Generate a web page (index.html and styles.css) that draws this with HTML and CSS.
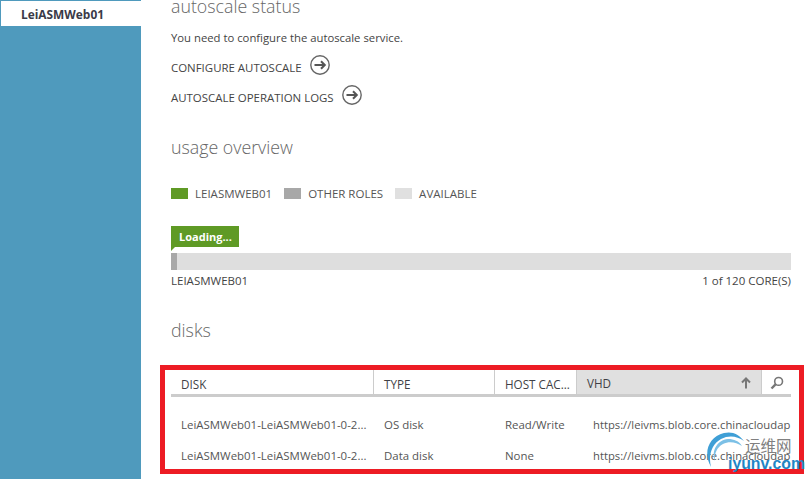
FILE: index.html
```html
<!DOCTYPE html>
<html lang="en">
<head>
<meta charset="utf-8">
<title>LeiASMWeb01</title>
<link rel="stylesheet" href="styles.css">
</head>
<body>
<div class="page">
  <aside class="sidebar">
    <div class="tab">LeiASMWeb01</div>
  </aside>
  <main class="main">
    <h2 class="heading first">autoscale status</h2>
    <p class="note">You need to configure the autoscale service.</p>
    <a class="action one">CONFIGURE AUTOSCALE
      <svg class="go" viewBox="0 0 20 20"><circle cx="10" cy="10" r="9.2" fill="none" stroke="#666" stroke-width="1.4"/><path d="M4.5 10H15M11 6.2l3.8 3.8-3.8 3.8" fill="none" stroke="#555" stroke-width="2"/></svg>
    </a>
    <a class="action two">AUTOSCALE OPERATION LOGS
      <svg class="go" viewBox="0 0 20 20"><circle cx="10" cy="10" r="9.2" fill="none" stroke="#666" stroke-width="1.4"/><path d="M4.5 10H15M11 6.2l3.8 3.8-3.8 3.8" fill="none" stroke="#555" stroke-width="2"/></svg>
    </a>
    <h2 class="heading usage">usage overview</h2>
    <div class="legend">
      <span class="swatch green"></span><span>LEIASMWEB01</span>
      <span class="swatch gray"></span><span>OTHER ROLES</span>
      <span class="swatch light"></span><span>AVAILABLE</span>
    </div>
    <div class="flag">Loading...</div>
    <div class="bar"><div class="fill"></div></div>
    <div class="barlabels"><span>LEIASMWEB01</span><span>1 of 120 CORE(S)</span></div>
    <h2 class="heading disks">disks</h2>
    <section class="redbox">
      <div class="grid head">
        <div class="th">DISK</div>
        <div class="th">TYPE</div>
        <div class="th">HOST CAC...</div>
        <div class="th sorted">VHD
          <svg class="arrow" viewBox="0 0 10 12"><path d="M5 11.5V1.5M1 5.5l4-4 4 4" fill="none" stroke="#777" stroke-width="2"/></svg>
        </div>
        <div class="th search">
          <svg class="lens" viewBox="0 0 14 14"><circle cx="8.6" cy="5.4" r="3.9" fill="none" stroke="#777" stroke-width="1.6"/><path d="M5.8 8.2L1.5 12.5" stroke="#777" stroke-width="2.4"/></svg>
        </div>
      </div>
      <div class="grid row r1">
        <div class="td">LeiASMWeb01-LeiASMWeb01-0-2...</div>
        <div class="td">OS disk</div>
        <div class="td">Read/Write</div>
        <div class="td url">https://leivms.blob.core.chinacloudap</div>
      </div>
      <div class="grid row r2">
        <div class="td">LeiASMWeb01-LeiASMWeb01-0-2...</div>
        <div class="td">Data disk</div>
        <div class="td">None</div>
        <div class="td url">https://leivms.blob.core.chinacloudap</div>
      </div>
    </section>
  </main>
  <div class="mark">
    <svg class="swirl" viewBox="0 0 44 42"><path d="M7 36C-1 22 4 6 20 2c8-2 15 1 20 8C33 5 25 4 17 8 8 13 4 24 7 36z" fill="#3f9fd6"/><path d="M11 30C7 20 13 9 24 8c6 0 11 2 14 7C32 11 25 10 19 13c-6 3-9 10-8 17z" fill="#7cc0e6"/></svg>
    <span class="cn">运维网</span>
    <span class="en">iyunv.com</span>
  </div>
</div>
</body>
</html>
```
FILE: styles.css
```css
* { box-sizing: border-box; }
html, body { margin: 0; padding: 0; background: #fff; }
body { font-family: "Open Sans", "Noto Sans", sans-serif; color: #444; overflow: hidden; }
.page { display: flex; width: 808px; height: 479px; position: relative; overflow: hidden; }
.sidebar { width: 141px; flex: none; background: #4f9abd; padding: 1px 0 0 1px; }
.tab { height: 25px; background: #fff; color: #3a3a48; font-size: 11.9px; font-weight: 700; line-height: 26px; padding-left: 20px; }
.main { width: 667px; flex: none; padding-left: 30px; }
.heading { margin: 0; font-size: 17.8px; font-weight: 300; color: #666; line-height: 24px; height: 24px; }
.first { margin-top: -6px; }
.note { margin: 12px 0 0; font-size: 11.3px; line-height: 16px; height: 16px; color: #444; }
.action { display: flex; align-items: center; font-size: 11.45px; color: #444; height: 20px; line-height: 20px; }
.action.one { margin-top: 12px; }
.action.two { margin-top: 10px; }
.go { width: 20px; height: 20px; margin-left: 8px; margin-bottom: 6px; flex: none; }
.usage { margin-top: 27px; }
.legend { display: flex; align-items: center; margin-top: 26px; height: 16px; font-size: 11.5px; color: #555; }
.swatch { width: 17px; height: 11px; margin-right: 7px; }
.swatch.gray { margin-left: 12px; }
.swatch.light { margin-left: 12px; }
.green { background: #5f9a25; }
.gray { background: #a8a8a8; }
.light { background: #e0e0e0; }
.flag { position: relative; margin-top: 25px; width: 68px; height: 21px; background: #5f9a25; color: #fff; font-size: 11px; font-weight: 700; line-height: 21px; padding-left: 8px; }
.flag::after { content: ""; position: absolute; left: 0; top: 21px; border-top: 4px solid #5f9a25; border-right: 4px solid transparent; }
.bar { margin-top: 6px; width: 620px; height: 17px; background: #dedede; }
.fill { width: 6px; height: 17px; background: #a8a8a8; }
.barlabels { width: 620px; display: flex; justify-content: space-between; font-size: 11.5px; line-height: 16px; margin-top: 3px; color: #444; }
.disks { margin-top: 29px; }
.redbox { margin-left: -11px; margin-top: 23px; width: 644px; height: 109px; border: 5px solid #ed1c24; padding: 0 8px 0 6px; }
.grid { display: grid; grid-template-columns: 203px 121px 82px 185px 29px; }
.head { height: 27px; border-bottom: 3px solid #ccc; }
.th { font-size: 11.7px; font-weight: 500; color: #3f3f46; line-height: 24px; height: 24px; padding: 2px 0 0 10px; border-right: 1px solid #ccc; white-space: nowrap; overflow: hidden; }
.th:nth-child(3) { font-weight: 400; }
.th.sorted { background: #e0e0e0; display: flex; justify-content: space-between; align-items: center; padding-right: 10px; font-weight: 400; }
.arrow { width: 10px; height: 12px; }
.th.search { border-right: 0; display: flex; align-items: center; padding-left: 8px; }
.lens { width: 14px; height: 14px; }
.row { font-size: 11.45px; height: 16px; line-height: 16px; color: #555; }
.r1 { margin-top: 20px; }
.r2 { margin-top: 15px; }
.td { padding-left: 10px; white-space: nowrap; overflow: hidden; }
.td.url { grid-column: span 2; padding-left: 16px; font-size: 11.25px; }
.mark { position: absolute; left: 704px; top: 431px; width: 104px; height: 44px; }
.swirl { position: absolute; left: 0; top: 0; width: 44px; height: 42px; }
.cn { position: absolute; left: 41px; top: 4px; font-family: "Noto Sans CJK SC", sans-serif; font-size: 15.5px; line-height: 20px; color: #808080; white-space: nowrap; }
.en { position: absolute; left: 24px; top: 24px; font-family: "Liberation Sans", sans-serif; font-size: 15.8px; font-weight: 700; line-height: 18px; color: #1f86c6; white-space: nowrap; }
```
